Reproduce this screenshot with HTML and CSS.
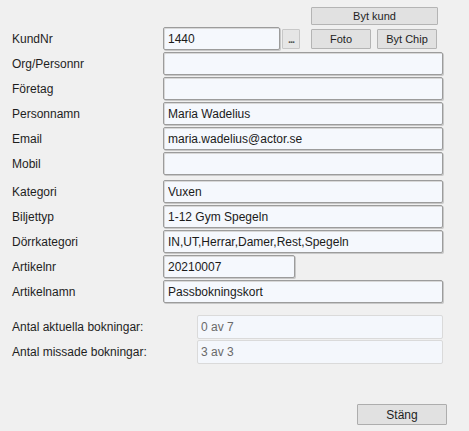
FILE: index.html
```html
<!DOCTYPE html>
<html lang="sv">
	<head>
		<meta charset="UTF-8" />
		<title>Kund</title>
		<link rel="stylesheet" href="styles.css">
	</head>
	<body>
		<div class="dialog">
			<div class="head">
				<button class="btn btn-byt">Byt kund</button>

				<label class="lbl">KundNr</label>
				<input class="field field-kund" type="text" value="1440" />
				<button class="btn btn-dots">...</button>
				<button class="btn btn-foto">Foto</button>
				<button class="btn btn-chip">Byt Chip</button>
			</div>

			<div class="row">
				<label class="lbl">Org/Personnr</label>
				<input class="field" type="text" value="" />
			</div>
			<div class="row">
				<label class="lbl">Företag</label>
				<input class="field" type="text" value="" />
			</div>
			<div class="row">
				<label class="lbl">Personnamn</label>
				<input class="field" type="text" value="Maria Wadelius" />
			</div>
			<div class="row">
				<label class="lbl">Email</label>
				<input class="field" type="text" value="maria.wadelius@actor.se" />
			</div>
			<div class="row">
				<label class="lbl">Mobil</label>
				<input class="field" type="text" value="" />
			</div>

			<div class="group">
				<div class="row">
					<label class="lbl">Kategori</label>
					<input class="field" type="text" value="Vuxen" />
				</div>
				<div class="row">
					<label class="lbl">Biljettyp</label>
					<input class="field" type="text" value="1-12 Gym Spegeln" />
				</div>
				<div class="row">
					<label class="lbl">Dörrkategori</label>
					<input class="field" type="text" value="IN,UT,Herrar,Damer,Rest,Spegeln" />
				</div>
				<div class="row">
					<label class="lbl">Artikelnr</label>
					<input class="field field-art" type="text" value="20210007" />
				</div>
				<div class="row">
					<label class="lbl">Artikelnamn</label>
					<input class="field" type="text" value="Passbokningskort" />
				</div>
			</div>

			<div class="stats">
				<div class="stat">
					<label class="lbl lbl-stat">Antal aktuella bokningar:</label>
					<input class="field field-off" type="text" value="0 av 7" disabled />
				</div>
				<div class="stat">
					<label class="lbl lbl-stat">Antal missade bokningar:</label>
					<input class="field field-off" type="text" value="3 av 3" disabled />
				</div>
			</div>

			<div class="footer">
				<button class="btn btn-close">Stäng</button>
			</div>
		</div>
	</body>
</html>
```

FILE: styles.css
```css
html,
body {
	margin: 0;
	background: #f0f0f0;
}

body {
	width: 469px;
	height: 431px;
	overflow: hidden;
	font-family: "Liberation Sans", Arial, sans-serif;
	font-size: 12px;
	color: #1e1e1e;
}

.dialog {
	padding: 7px 0 0 12px;
}

.lbl {
	display: flex;
	align-items: center;
	width: 151px;
	flex-shrink: 0;
	color: #1e1e1e;
}

.field {
	box-sizing: border-box;
	width: 280px;
	height: 23px;
	margin: 0;
	padding: 0 4px;
	border: 1px solid #9c9c9c;
	border-radius: 2px;
	box-shadow: inset 1px 1px 0 #d8d8d8, 1px 1px 0 #c8c8c8;
	background: #f5f8fd;
	font-family: "Liberation Sans", Arial, sans-serif;
	font-size: 12px;
	color: #1a1a1a;
	outline: none;
}

.btn {
	box-sizing: border-box;
	margin: 0;
	padding: 0;
	height: 20px;
	border: 1px solid #b4b4b4;
	border-radius: 1px;
	background: #e1e1e1;
	font-family: "Liberation Sans", Arial, sans-serif;
	font-size: 11px;
	color: #1e1e1e;
}

/* header: KundNr row with the extra buttons above and beside it */
.head {
	display: grid;
	grid-template-columns: 151px 117px 2px 18px 11px 60px 6px 61px;
	grid-template-rows: 18px 2px 23px;
	align-items: center;
}

.btn-byt {
	grid-column: 6 / 9;
	grid-row: 1;
	height: 18px;
}

.head .lbl {
	grid-column: 1;
	grid-row: 3;
	height: 100%;
}

.field-kund {
	grid-column: 2;
	grid-row: 3;
	width: 117px;
}

.btn-dots {
	grid-column: 4;
	grid-row: 3;
	border-color: #c8c8c8;
	background: #e6e6e6;
	font-weight: bold;
	color: #555;
	letter-spacing: -1px;
}

.btn-foto {
	grid-column: 6;
	grid-row: 3;
}

.btn-chip {
	grid-column: 8;
	grid-row: 3;
	width: 60px;
}

.row {
	display: flex;
	height: 23px;
	margin-top: 2px;
}

.group {
	margin-top: 5px;
}

.field-art {
	width: 132px;
}

.stats {
	margin-top: 12px;
}

.stat {
	display: flex;
	height: 24px;
	margin-bottom: 1px;
}

.lbl-stat {
	width: 185px;
}

.field-off {
	width: 246px;
	height: 24px;
	padding-left: 3px;
	border-color: #dadada;
	box-shadow: none;
	background: #f4f7fc;
	color: #6a6a6a;
}

.footer {
	display: flex;
	justify-content: flex-end;
	margin-top: 40px;
	padding-right: 22px;
}

.btn-close {
	width: 90px;
	height: 21px;
	border-color: #adadad;
	font-size: 12px;
}
```
